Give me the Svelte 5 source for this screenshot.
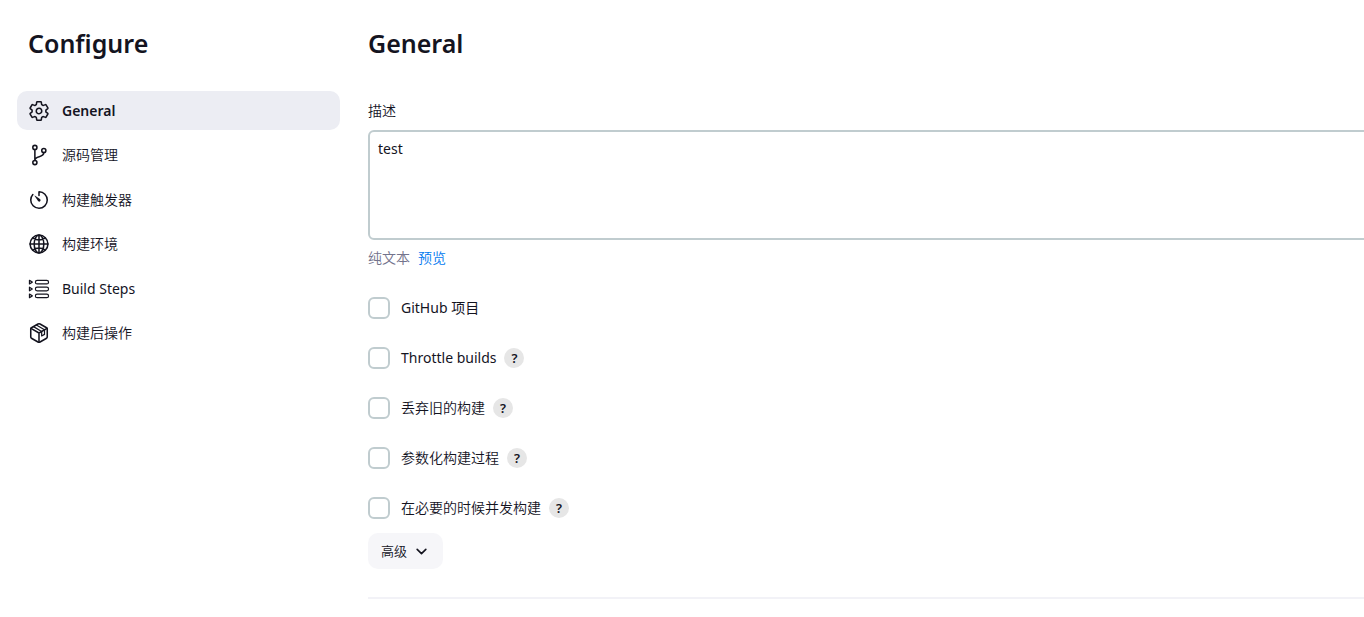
<script>
  const sections = [
    { label: 'General', lang: 'en' },
    { label: '源码管理', lang: 'zh' },
    { label: '构建触发器', lang: 'zh' },
    { label: '构建环境', lang: 'zh' },
    { label: 'Build Steps', lang: 'en' },
    { label: '构建后操作', lang: 'zh' }
  ];
  const options = [
    { label: 'GitHub 项目', lang: 'en', help: false },
    { label: 'Throttle builds', lang: 'en', help: true },
    { label: '丢弃旧的构建', lang: 'zh', help: true },
    { label: '参数化构建过程', lang: 'zh', help: true },
    { label: '在必要的时候并发构建', lang: 'zh', help: true }
  ];
  let active = $state(0);
  let description = $state('test');
</script>

{#snippet icon(index)}
  <svg class="icon" viewBox="0 0 512 512" aria-hidden="true">
    {#if index === 0}
      <path d="M262.29 192.31a64 64 0 1057.4 57.4 64.13 64.13 0 00-57.4-57.4zM416.39 256a154.34 154.34 0 01-1.53 20.79l45.21 35.46a10.81 10.81 0 012.45 13.75l-42.77 74a10.81 10.81 0 01-13.14 4.59l-44.9-18.08a16.11 16.11 0 00-15.17 1.75A164.48 164.48 0 01325 400.8a15.94 15.94 0 00-8.82 12.14l-6.73 47.89a11.08 11.08 0 01-10.68 9.17h-85.54a11.11 11.11 0 01-10.69-8.87l-6.72-47.82a16.07 16.07 0 00-9-12.22 155.3 155.3 0 01-21.46-12.57 16 16 0 00-15.11-1.71l-44.89 18.07a10.81 10.81 0 01-13.14-4.58l-42.77-74a10.8 10.8 0 012.45-13.75l38.21-30a16.05 16.05 0 006-14.08c-.36-4.17-.58-8.33-.58-12.5s.21-8.27.58-12.35a16 16 0 00-6.07-13.94l-38.19-30A10.81 10.81 0 0149.48 186l42.77-74a10.81 10.81 0 0113.14-4.59l44.9 18.08a16.11 16.11 0 0015.17-1.75A164.48 164.48 0 01187 111.2a15.94 15.94 0 008.82-12.14l6.73-47.89A11.08 11.08 0 01213.23 42h85.54a11.11 11.11 0 0110.69 8.87l6.72 47.82a16.07 16.07 0 009 12.22 155.3 155.3 0 0121.46 12.57 16 16 0 0015.11 1.71l44.89-18.07a10.81 10.81 0 0113.14 4.58l42.77 74a10.8 10.8 0 01-2.45 13.75l-38.21 30a16.05 16.05 0 00-6.05 14.08c.33 4.14.55 8.3.55 12.47z" />
    {:else if index === 1}
      <circle cx="160" cy="80" r="48" />
      <circle cx="160" cy="432" r="48" />
      <circle cx="368" cy="152" r="48" />
      <path d="M160 384V128M368 200c0 136-208 56-208 184" />
    {:else if index === 2}
      <path d="M112.91 128A191.85 191.85 0 0064 254c-1.18 106.35 85.65 193.8 192 194 106.2.2 192-85.83 192-192 0-104.54-83.55-189.61-187.5-192a4.36 4.36 0 00-4.5 4.37V152" />
      <path class="solid" d="M233.38 278.63l-79-113a8.13 8.13 0 0111.32-11.32l113 79a32.5 32.5 0 01-37.25 53.26 33.21 33.21 0 01-8.07-7.94z" />
    {:else if index === 3}
      <circle cx="256" cy="256" r="208" />
      <path d="M256 48c-58.07 0-112.67 93.31-112.67 208S197.93 464 256 464s112.67-93.31 112.67-208S314.07 48 256 48zM117.33 117.33c38.24 27.15 86.38 43.34 138.67 43.34s100.43-16.19 138.67-43.34M394.67 394.67c-38.24-27.15-86.38-43.34-138.67-43.34s-100.43 16.19-138.67 43.34M256 48v416M464 256H48" />
    {:else if index === 4}
      <g class="fine">
        {#each [96, 256, 416] as y}
          <path d="M34 {y - 42}v84l66-42z" />
          <rect x="172" y={y - 42} width="306" height="84" rx="42" />
        {/each}
      </g>
    {:else}
      <path d="M448 351V160a32 32 0 00-16-27L280 46a48 48 0 00-48 0L80 133a32 32 0 00-16 27v191a32 32 0 0016 27l152 87a48 48 0 0048 0l152-87a32 32 0 0016-27z" />
      <path d="M69 147l187 108 187-108M256 470V255" />
      <path class="fine" d="M128 108l190 112v106l66-38V180L194 70" />
    {/if}
  </svg>
{/snippet}

<div class="page">
  <aside>
    <h1>Configure</h1>
    <nav aria-label="Configure">
      {#each sections as section, i}
        <button type="button" class:active={active === i} onclick={() => (active = i)}>
          {@render icon(i)}
          <span lang={section.lang}>{section.label}</span>
        </button>
      {/each}
    </nav>
  </aside>

  <main>
    <h2>General</h2>
    <label class="caption" for="description" lang="zh">描述</label>
    <textarea id="description" bind:value={description}></textarea>
    <div class="format" lang="zh">
      <span>纯文本</span>
      <a href="#preview">预览</a>
    </div>

    <div class="options">
      {#each options as option}
        <div class="option">
          <label lang={option.lang}><input type="checkbox" />{option.label}</label>
          {#if option.help}
            <button type="button" class="help" aria-label="Help: {option.label}">?</button>
          {/if}
        </div>
      {/each}
    </div>

    <button type="button" class="advanced">
      <span lang="zh">高级</span>
      <svg viewBox="0 0 24 24" aria-hidden="true"><path d="M4 8l8 8 8-8" /></svg>
    </button>
    <hr />
  </main>
</div>

<style>
  :global(body) {
    margin: 0;
    background: #fff;
  }

  .page {
    display: grid;
    grid-template-columns: 323px minmax(0, 1fr);
    gap: 28px;
    padding: 26px 0 0 17px;
    overflow: hidden;
    color: #14141f;
    font: 14px/20px 'Noto Sans', 'Noto Sans CJK SC', sans-serif;
  }

  [lang='zh'] {
    font-weight: 350;
  }

  button,
  textarea {
    font: inherit;
    color: inherit;
  }

  button {
    border: 0;
    padding: 0;
    cursor: pointer;
  }

  h1,
  h2 {
    margin: 0;
    font-size: 25px;
    line-height: 34px;
    font-weight: 600;
  }

  h1 {
    padding-left: 11px;
  }

  nav {
    display: flex;
    flex-direction: column;
    justify-content: space-between;
    height: 262px;
    margin-top: 31px;
  }

  nav button {
    display: flex;
    align-items: center;
    gap: 12px;
    height: 39px;
    padding: 0 11px;
    border-radius: 10px;
    background: transparent;
    text-align: left;
  }

  nav .active {
    background: #ecedf3;
  }

  nav .active span {
    font-weight: 600;
  }

  .icon {
    width: 22px;
    height: 22px;
    fill: none;
    stroke: currentColor;
    stroke-width: 36;
    stroke-linecap: round;
    stroke-linejoin: round;
  }

  .fine {
    stroke-width: 28;
  }

  .solid {
    fill: currentColor;
    stroke: none;
  }

  main {
    display: flex;
    flex-direction: column;
    align-items: flex-start;
    margin-right: -20px;
  }

  .caption {
    margin: 41px 0 9px;
  }

  textarea {
    box-sizing: border-box;
    width: 100%;
    height: 110px;
    padding: 7px 8px;
    border: 2px solid #c0cccf;
    border-radius: 6px;
    outline: 0;
    background: #fff;
    resize: none;
  }

  .format {
    display: flex;
    gap: 8px;
    margin-top: 8px;
    color: #73738c;
  }

  a {
    color: #0078f0;
    text-decoration: none;
  }

  .options {
    display: flex;
    flex-direction: column;
    gap: 28px;
    margin-top: 29px;
  }

  .option,
  .option label {
    display: flex;
    align-items: center;
  }

  .option {
    gap: 8px;
    height: 22px;
  }

  .option label {
    gap: 11px;
  }

  input {
    appearance: none;
    box-sizing: border-box;
    width: 22px;
    height: 22px;
    margin: 0;
    border: 2px solid #c0cccf;
    border-radius: 6px;
    background: #fff;
  }

  input:checked {
    border-color: #006fe6;
    background: #006fe6;
  }

  .help {
    width: 20px;
    height: 20px;
    border-radius: 50%;
    background: #e6e6e6;
    font-size: 13px;
    font-weight: 600;
  }

  .advanced {
    display: flex;
    align-items: center;
    gap: 8px;
    height: 36px;
    margin-top: 14px;
    padding: 0 15px 0 13px;
    border-radius: 10px;
    background: #f6f6f9;
    font-size: 13px;
  }

  .advanced svg {
    width: 13px;
    height: 13px;
    fill: none;
    stroke: currentColor;
    stroke-width: 3;
    stroke-linecap: round;
    stroke-linejoin: round;
  }

  hr {
    width: 100%;
    height: 2px;
    margin: 28px 0 0;
    border: 0;
    background: #f2f2f7;
  }
</style>
